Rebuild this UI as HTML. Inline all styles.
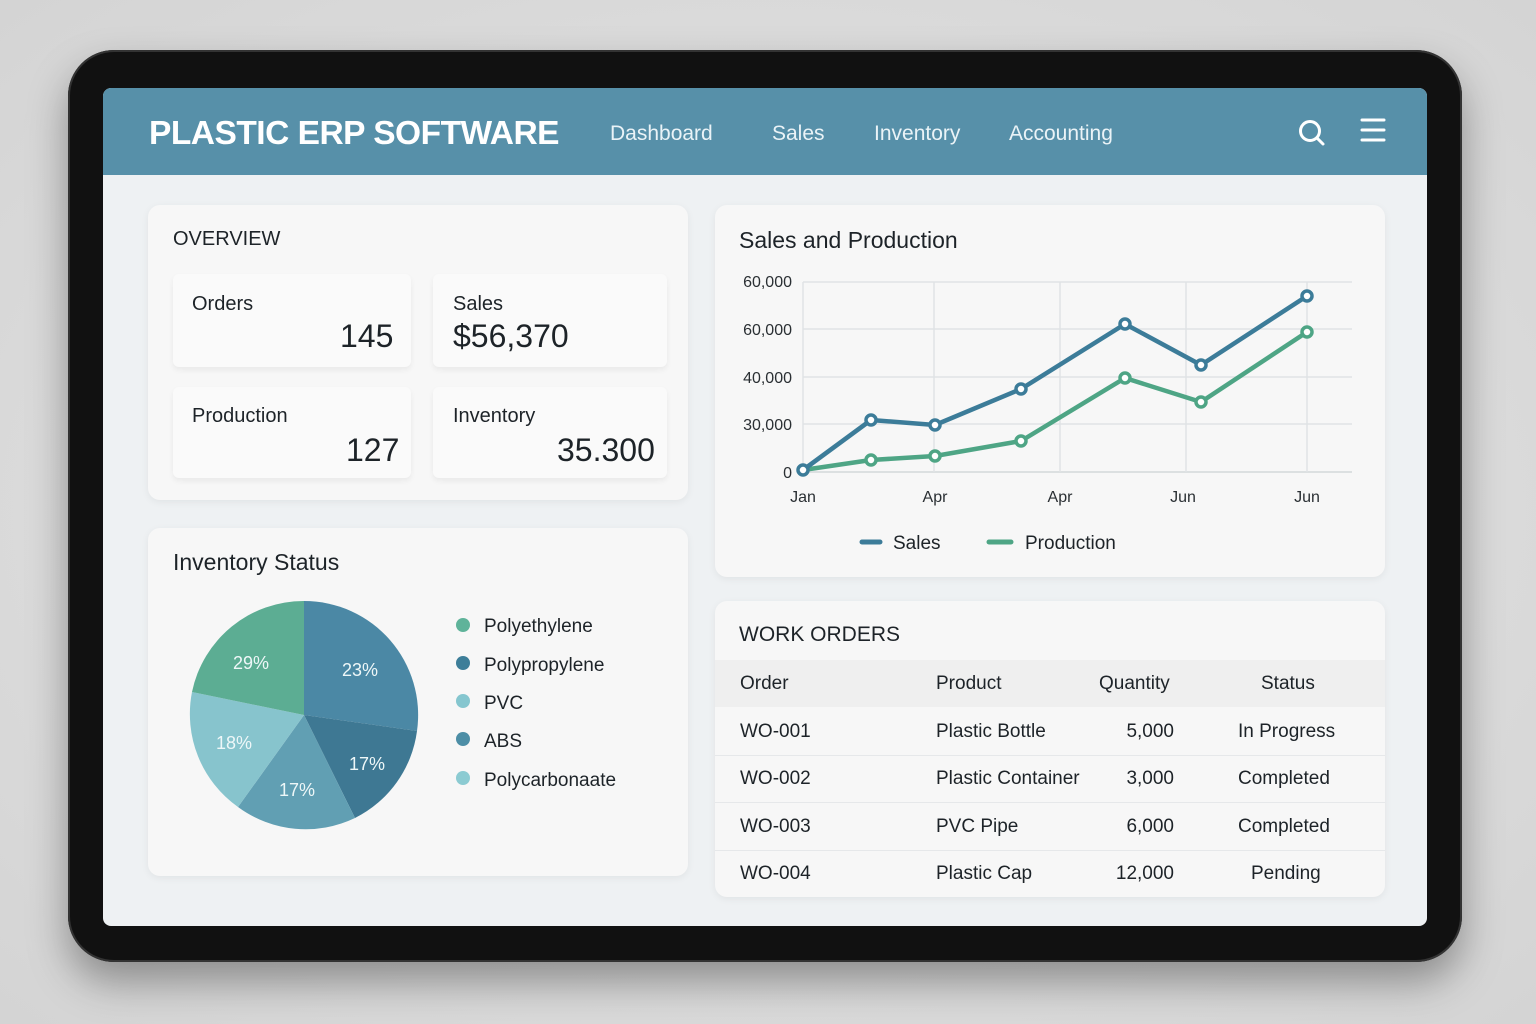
<!DOCTYPE html>
<html><head><meta charset="utf-8"><style>
*{margin:0;padding:0;box-sizing:border-box}
body{width:1536px;height:1024px;overflow:hidden;background:radial-gradient(ellipse at center,#e6e6e6 0%,#d4d4d4 100%);font-family:"Liberation Sans",sans-serif;color:#1d2328;position:relative}
.abs{position:absolute}
.dev{left:68px;top:50px;width:1394px;height:912px;background:#111;border-radius:46px;box-shadow:0 20px 40px rgba(0,0,0,.35),inset 0 0 0 2px #333}
.scr{left:103px;top:88px;width:1324px;height:838px;background:#eef1f3;border-radius:8px;overflow:hidden}
.hdr{left:0;top:0;width:1324px;height:87px;background:#5790a9}
.card{background:#f7f7f7;border-radius:12px;box-shadow:0 2px 8px rgba(0,0,0,.06)}
.tile{background:#fafafa;border-radius:6px;box-shadow:0 3px 6px rgba(0,0,0,.06)}
.t{position:absolute;white-space:nowrap}
</style></head><body>
<div class="abs dev"></div>
<div class="abs scr">
 <div class="abs hdr">
  <div class="t" style="left:46px;top:27px;font-size:33.5px;font-weight:bold;color:#fff;letter-spacing:-.5px">PLASTIC ERP SOFTWARE</div>
  <div class="t" style="left:507px;top:34px;font-size:21px;color:#eaf3f7">Dashboard</div>
  <div class="t" style="left:669px;top:34px;font-size:21px;color:#eaf3f7">Sales</div>
  <div class="t" style="left:771px;top:34px;font-size:21px;color:#eaf3f7">Inventory</div>
  <div class="t" style="left:906px;top:34px;font-size:21px;color:#eaf3f7">Accounting</div>
  <svg class="abs" style="left:1194px;top:30px" width="30" height="30"><circle cx="13" cy="13" r="9.5" fill="none" stroke="#fff" stroke-width="3"/><line x1="20" y1="20" x2="26" y2="26" stroke="#fff" stroke-width="3" stroke-linecap="round"/></svg>
  <svg class="abs" style="left:1256px;top:28px" width="30" height="30"><g stroke="#fff" stroke-width="3" stroke-linecap="round"><line x1="3" y1="4" x2="25" y2="4"/><line x1="3" y1="14" x2="25" y2="14"/><line x1="3" y1="24" x2="25" y2="24"/></g></svg>
 </div>
</div>

<div class="abs card" style="left:148px;top:205px;width:540px;height:295px"></div>
<div class="t" style="left:173px;top:228px;font-size:20px">OVERVIEW</div>
<div class="abs tile" style="left:173px;top:274px;width:238px;height:93px"></div>
<div class="abs tile" style="left:433px;top:274px;width:234px;height:93px"></div>
<div class="abs tile" style="left:173px;top:387px;width:238px;height:91px"></div>
<div class="abs tile" style="left:433px;top:387px;width:234px;height:91px"></div>
<div class="t" style="left:192px;top:293px;font-size:20px">Orders</div>
<div class="t" style="left:340px;top:318px;font-size:32px">145</div>
<div class="t" style="left:453px;top:293px;font-size:20px">Sales</div>
<div class="t" style="left:453px;top:318px;font-size:32px">$56,370</div>
<div class="t" style="left:192px;top:405px;font-size:20px">Production</div>
<div class="t" style="left:346px;top:432px;font-size:32px">127</div>
<div class="t" style="left:453px;top:405px;font-size:20px">Inventory</div>
<div class="t" style="left:557px;top:432px;font-size:32px">35.300</div>

<div class="abs card" style="left:148px;top:528px;width:540px;height:348px"></div>
<div class="t" style="left:173px;top:549px;font-size:23px">Inventory Status</div>
<svg class="abs" style="left:0;top:0" width="700" height="900">
 <path d="M304,715 L304,601 A114,114 0 0 1 417,731 Z" fill="#4b88a5"/>
 <path d="M304,715 L417,731 A114,114 0 0 1 355,818 Z" fill="#3e7893"/>
 <path d="M304,715 L355,818 A114,114 0 0 1 238,807 Z" fill="#619fb3"/>
 <path d="M304,715 L238,807 A114,114 0 0 1 192,692 Z" fill="#87c4cd"/>
 <path d="M304,715 L192,692 A114,114 0 0 1 304,601 Z" fill="#5cad93"/>
 <g font-family="Liberation Sans" font-size="18" fill="#eef7f8">
  <text x="233" y="669">29%</text><text x="342" y="676">23%</text>
  <text x="216" y="749">18%</text><text x="349" y="770">17%</text><text x="279" y="796">17%</text>
 </g>
 <circle cx="463" cy="625" r="7" fill="#5fb39a"/><circle cx="463" cy="663" r="7" fill="#3d7e99"/>
 <circle cx="463" cy="701" r="7" fill="#85c6cf"/><circle cx="463" cy="739" r="7" fill="#4d8ea6"/>
 <circle cx="463" cy="778" r="7" fill="#8ccbd2"/>
 <g font-family="Liberation Sans" font-size="19" fill="#1d2328">
  <text x="484" y="632">Polyethylene</text><text x="484" y="671">Polypropylene</text>
  <text x="484" y="709">PVC</text><text x="484" y="747">ABS</text><text x="484" y="786">Polycarbonaate</text>
 </g>
</svg>

<div class="abs card" style="left:715px;top:205px;width:670px;height:372px"></div>
<div class="t" style="left:739px;top:227px;font-size:23px">Sales and Production</div>
<svg class="abs" style="left:0;top:0" width="1400" height="600">
 <g stroke="#e0e3e5" stroke-width="1.5">
  <line x1="803" y1="282" x2="1352" y2="282"/><line x1="803" y1="329" x2="1352" y2="329"/>
  <line x1="803" y1="377" x2="1352" y2="377"/><line x1="803" y1="424" x2="1352" y2="424"/>
  <line x1="803" y1="472" x2="1352" y2="472" stroke="#d4d8da"/>
  <line x1="803" y1="282" x2="803" y2="472"/><line x1="934" y1="282" x2="934" y2="472"/>
  <line x1="1060" y1="282" x2="1060" y2="472"/><line x1="1186" y1="282" x2="1186" y2="472"/>
  <line x1="1307" y1="282" x2="1307" y2="472"/>
 </g>
 <g font-family="Liberation Sans" font-size="16" fill="#2a2f33" text-anchor="end">
  <text x="792" y="287">60,000</text><text x="792" y="335">60,000</text><text x="792" y="383">40,000</text>
  <text x="792" y="430">30,000</text><text x="792" y="478">0</text>
 </g>
 <g font-family="Liberation Sans" font-size="16" fill="#2a2f33" text-anchor="middle">
  <text x="803" y="502">Jan</text><text x="935" y="502">Apr</text><text x="1060" y="502">Apr</text>
  <text x="1183" y="502">Jun</text><text x="1307" y="502">Jun</text>
 </g>
 <polyline points="803,470 871,460 935,456 1021,441 1125,378 1201,402 1307,332" fill="none" stroke="#4ea585" stroke-width="4.5" stroke-linejoin="round"/>
 <polyline points="803,470 871,420 935,425 1021,389 1125,324 1201,365 1307,296" fill="none" stroke="#3c7c99" stroke-width="4.5" stroke-linejoin="round"/>
 <g fill="#fff" stroke="#4ea585" stroke-width="3.5">
  <circle cx="871" cy="460" r="5"/><circle cx="935" cy="456" r="5"/><circle cx="1021" cy="441" r="5"/><circle cx="1125" cy="378" r="5"/><circle cx="1201" cy="402" r="5"/><circle cx="1307" cy="332" r="5"/>
 </g>
 <g fill="#fff" stroke="#3c7c99" stroke-width="3.5">
  <circle cx="803" cy="470" r="5"/><circle cx="871" cy="420" r="5"/><circle cx="935" cy="425" r="5"/><circle cx="1021" cy="389" r="5"/><circle cx="1125" cy="324" r="5"/><circle cx="1201" cy="365" r="5"/><circle cx="1307" cy="296" r="5"/>
 </g>
 <line x1="862" y1="542" x2="880" y2="542" stroke="#3c7c99" stroke-width="5" stroke-linecap="round"/>
 <line x1="989" y1="542" x2="1011" y2="542" stroke="#4ea585" stroke-width="5" stroke-linecap="round"/>
 <g font-family="Liberation Sans" font-size="19" fill="#1d2328"><text x="893" y="549">Sales</text><text x="1025" y="549">Production</text></g>
</svg>

<div class="abs card" style="left:715px;top:601px;width:670px;height:296px;overflow:hidden">
 <div class="abs" style="left:0;top:59px;width:670px;height:47px;background:#efefef"></div>
 <div class="abs" style="left:0;top:154px;width:670px;height:1px;background:#e6e8ea"></div>
 <div class="abs" style="left:0;top:201px;width:670px;height:1px;background:#e6e8ea"></div>
 <div class="abs" style="left:0;top:249px;width:670px;height:1px;background:#e6e8ea"></div>
</div>
<div class="t" style="left:739px;top:623px;font-size:21px">WORK ORDERS</div>
<div style="position:absolute;left:0;top:0;font-size:19px;color:#1d2328">
 <div class="t" style="left:740px;top:673px">Order</div>
 <div class="t" style="left:936px;top:673px">Product</div>
 <div class="t" style="left:1099px;top:673px">Quantity</div>
 <div class="t" style="left:1261px;top:673px">Status</div>
 <div class="t" style="left:740px;top:721px">WO-001</div><div class="t" style="left:936px;top:721px">Plastic Bottle</div><div class="t" style="left:1174px;top:721px;transform:translateX(-100%)">5,000</div><div class="t" style="left:1238px;top:721px">In Progress</div>
 <div class="t" style="left:740px;top:768px">WO-002</div><div class="t" style="left:936px;top:768px">Plastic Container</div><div class="t" style="left:1174px;top:768px;transform:translateX(-100%)">3,000</div><div class="t" style="left:1238px;top:768px">Completed</div>
 <div class="t" style="left:740px;top:816px">WO-003</div><div class="t" style="left:936px;top:816px">PVC Pipe</div><div class="t" style="left:1174px;top:816px;transform:translateX(-100%)">6,000</div><div class="t" style="left:1238px;top:816px">Completed</div>
 <div class="t" style="left:740px;top:863px">WO-004</div><div class="t" style="left:936px;top:863px">Plastic Cap</div><div class="t" style="left:1174px;top:863px;transform:translateX(-100%)">12,000</div><div class="t" style="left:1251px;top:863px">Pending</div>
</div>
</body></html>
